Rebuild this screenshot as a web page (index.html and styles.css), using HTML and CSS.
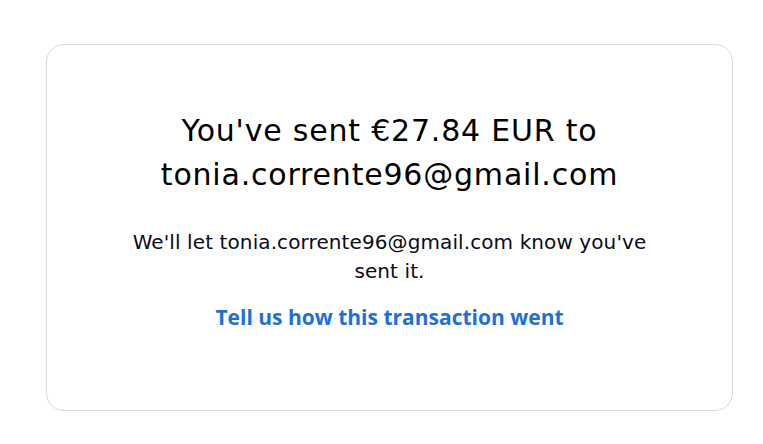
FILE: index.html
```html
<!DOCTYPE html>
<html>
<head>
<meta charset="utf-8">
<link rel="stylesheet" href="styles.css">
</head>
<body>
<div class="card">
  <h1 class="title">You've sent €27.84 EUR to tonia.corrente96@gmail.com</h1>
  <p class="note">We'll let tonia.corrente96@gmail.com know you've sent it.</p>
  <a class="link" href="#">Tell us how this transaction went</a>
</div>
</body>
</html>
```

FILE: styles.css
```css
html, body {
  margin: 0;
  padding: 0;
  background: #ffffff;
}
body {
  padding: 44px 30px 34px 46px;
  font-family: "DejaVu Sans", "Open Sans", sans-serif;
  color: #001435;
}
.card {
  box-sizing: border-box;
  height: 367px;
  border: 1px solid #d9d9d9;
  border-radius: 18px;
  display: flex;
  flex-direction: column;
  align-items: center;
  padding: 64px 80px 0;
  text-align: center;
}
.title {
  margin: 0;
  font-size: 30px;
  font-weight: 400;
  letter-spacing: 0.8px;
  line-height: 44px;
  max-width: 500px;
  color: #000;
}
.note {
  margin: 31px 0 0;
  font-size: 20px;
  letter-spacing: 0.1px;
  line-height: 29px;
  max-width: 530px;
  color: #0b0b1a;
}
.link {
  margin-top: 17px;
  font-family: "Open Sans", sans-serif;
  font-size: 21px;
  font-weight: 700;
  line-height: 28px;
  color: #1f6fd9;
  text-decoration: none;
}
```
